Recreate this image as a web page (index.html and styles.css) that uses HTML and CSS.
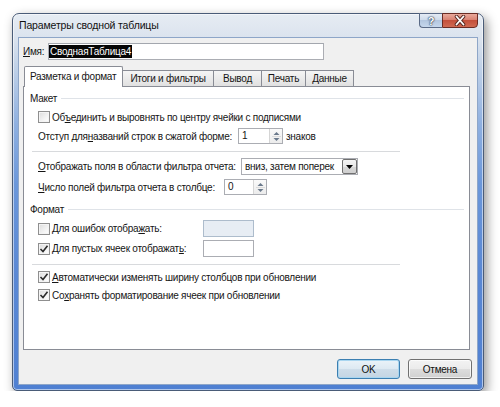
FILE: index.html
```html
<!DOCTYPE html>
<html lang="ru">
<head>
<meta charset="utf-8">
<title>Параметры сводной таблицы</title>
<link rel="stylesheet" href="styles.css">
</head>
<body>
<div class="window">
  <div class="titlebar">
    <span class="title">Параметры сводной таблицы</span>
    <div class="caption">
      <div class="cbtn help">?</div>
      <div class="cbtn close">
        <svg width="14" height="11" viewBox="0 0 14 11"><path d="M3.5 1.5 L10.5 9.5 M10.5 1.5 L3.5 9.5" stroke="#5a2a22" stroke-width="3.6" stroke-linecap="round"/><path d="M3.5 1.5 L10.5 9.5 M10.5 1.5 L3.5 9.5" stroke="#ffffff" stroke-width="1.8" stroke-linecap="round"/></svg>
      </div>
    </div>
  </div>
  <div class="client">
    <div class="name-row">
      <span class="name-label"><u>И</u>мя:</span>
      <div class="name-input"><span class="sel">СводнаяТаблица4</span></div>
    </div>
    <div class="tabs">
      <div class="tab t1 active">Разметка и формат</div>
      <div class="tab t2">Итоги и фильтры</div>
      <div class="tab t3">Вывод</div>
      <div class="tab t4">Печать</div>
      <div class="tab t5">Данные</div>
    </div>
    <div class="panel">
      <div class="group g1"><span>Макет</span></div>
      <div class="row r-merge"><span class="cb"></span><span>Об<u>ъ</u>единить и выровнять по центру ячейки с подписями</span></div>
      <div class="row r-indent">
        <span class="lbl w-indent">Отступ для <u>н</u>азваний строк в сжатой форме:</span>
        <div class="spin s-indent"><span class="val">1</span>
          <span class="spinbtn"><svg width="11" height="13" viewBox="0 0 11 13"><path d="M5.5 2 L8.5 5 L2.5 5 Z" fill="#6b7a8c"/><path d="M1 6.5 H10" stroke="#dcdcdc"/><path d="M2.5 8 L8.5 8 L5.5 11 Z" fill="#6b7a8c"/></svg></span>
        </div>
        <span class="suffix">знаков</span>
      </div>
      <div class="sep"></div>
      <div class="row r-show">
        <span class="lbl w-show"><u>О</u>тображать поля в области фильтра отчета:</span>
        <div class="combo"><span class="val">вниз, затем поперек</span>
          <span class="dd"><svg width="9" height="6" viewBox="0 0 9 6"><path d="M1 1 L8 1 L4.5 5 Z" fill="#000"/></svg></span>
        </div>
      </div>
      <div class="row r-count">
        <span class="lbl w-count"><u>Ч</u>исло полей фильтра отчета в столбце:</span>
        <div class="spin s-count"><span class="val">0</span>
          <span class="spinbtn"><svg width="11" height="13" viewBox="0 0 11 13"><path d="M5.5 2 L8.5 5 L2.5 5 Z" fill="#6b7a8c"/><path d="M1 6.5 H10" stroke="#dcdcdc"/><path d="M2.5 8 L8.5 8 L5.5 11 Z" fill="#6b7a8c"/></svg></span>
        </div>
      </div>
      <div class="group g2"><span>Формат</span></div>
      <div class="row r-err">
        <span class="lbl w-fmt"><span class="cb"></span><span>Для ошибок отобра<u>ж</u>ать:</span></span>
        <div class="field disabled"></div>
      </div>
      <div class="row r-empty">
        <span class="lbl w-fmt"><span class="cb checked"><svg width="10" height="10" viewBox="0 0 10 10"><path d="M1.5 5 L4 7.5 L8.5 1.8" fill="none" stroke="#2b2b2b" stroke-width="1.6"/></svg></span><span>Для пустых ячеек отображат<u>ь</u>:</span></span>
        <div class="field"></div>
      </div>
      <div class="sep sep2"></div>
      <div class="row r-auto"><span class="cb checked"><svg width="10" height="10" viewBox="0 0 10 10"><path d="M1.5 5 L4 7.5 L8.5 1.8" fill="none" stroke="#2b2b2b" stroke-width="1.6"/></svg></span><span><u>А</u>втоматически изменять ширину столбцов при обновлении</span></div>
      <div class="row r-keep"><span class="cb checked"><svg width="10" height="10" viewBox="0 0 10 10"><path d="M1.5 5 L4 7.5 L8.5 1.8" fill="none" stroke="#2b2b2b" stroke-width="1.6"/></svg></span><span>Со<u>х</u>ранять форматирование ячеек при обновлении</span></div>
    </div>
    <div class="buttons">
      <div class="btn default">OK</div>
      <div class="btn">Отмена</div>
    </div>
  </div>
</div>
</body>
</html>
```

FILE: styles.css
```css
* { box-sizing: border-box; }
body {
  margin: 0;
  background: #ffffff;
  font-family: "Liberation Sans", Arial, sans-serif;
  font-size: 10px;
  letter-spacing: -0.25px;
  color: #151515;
  white-space: nowrap;
}
u { text-decoration: underline; text-underline-offset: 1px; }

.window {
  margin: 13px 0 0 12px;
  width: 472px;
  height: 378px;
  border: 1px solid #4a5c78;
  border-radius: 7px 7px 5px 5px;
  padding: 0 6px 6px 6px;
  background: linear-gradient(180deg, #e6ecf3 0px, #dbe3ee 24px, #c3d3e8 50px, #8fb0e0 110px, #6b97da 170px, #5a88d4 260px, #4f80d2 100%);
  box-shadow: 3px 4px 11px rgba(0,0,0,0.42), inset 0 0 0 1px rgba(255,255,255,0.55);
  display: flex;
  flex-direction: column;
}

.titlebar {
  position: relative;
  height: 24px;
  display: flex;
  align-items: center;
}
.title {
  font-size: 10.5px;
  letter-spacing: -0.15px;
  color: #111;
  margin-top: -2px;
}
.caption {
  position: absolute;
  top: -1px;
  right: -1px;
  display: flex;
}
.cbtn {
  height: 15px;
  border: 1px solid #5a6a86;
  display: flex;
  align-items: center;
  justify-content: center;
}
.help {
  width: 23px;
  border-radius: 0 0 0 4px;
  border-right: none;
  background: linear-gradient(180deg, #e4ebf4 0%, #cfdbea 45%, #b3c6df 50%, #c6d7ec 100%);
  color: #fff;
  font-weight: bold;
  font-size: 11px;
  letter-spacing: 0;
  text-shadow: 0 0 1px #2f3f58, 0 0 1px #2f3f58, 0 0 2px #2f3f58;
}
.close {
  width: 36px;
  border-radius: 0 0 4px 0;
  border-color: #6b2c24;
  background: linear-gradient(180deg, #e9a99b 0%, #d98272 45%, #c4503b 50%, #d06a52 100%);
}

.client {
  flex: 1;
  background: #f0f0f0;
  box-shadow: 0 0 0 1px #8ea6c8;
  padding: 5px 5px 0 4px;
  display: flex;
  flex-direction: column;
}

.name-row {
  height: 17px;
  display: flex;
  align-items: center;
}
.name-label { width: 25px; }
.name-input {
  width: 276px;
  height: 17px;
  border: 1px solid #abadb3;
  border-top-color: #a3a7ae;
  background: #fff;
  display: flex;
  align-items: center;
}
.sel {
  background: #050505;
  color: #fff;
  line-height: 13px;
  padding: 0 1px 0 1px;
}

.tabs {
  margin-top: 6px;
  height: 20px;
  display: flex;
  align-items: flex-end;
  padding-left: 1px;
  position: relative;
  z-index: 1;
}
.tab {
  height: 16px;
  border: 1px solid #898c95;
  border-bottom: none;
  background: linear-gradient(180deg, #f5f5f5 0%, #ebebeb 50%, #e0e0e0 100%);
  text-align: center;
  line-height: 15px;
  margin-left: -1px;
}
.tab.active {
  height: 21px;
  margin-bottom: -1px;
  margin-left: 0;
  background: #fff;
  line-height: 20px;
  text-align: left;
  padding-left: 5px;
  border-radius: 2px 2px 0 0;
}
.t1 { width: 99px; }
.t2 { width: 92px; }
.t3 { width: 49px; }
.t4 { width: 45px; }
.t5 { width: 49px; }

.panel {
  width: 447px;
  height: 264px;
  border: 1px solid #898c95;
  background: #fff;
  display: flex;
  flex-direction: column;
}

.group {
  height: 14px;
  display: flex;
  align-items: center;
  padding-left: 6px;
}
.group::after {
  content: "";
  flex: 1;
  height: 1px;
  background: #dfe3e8;
  margin: 0 5px 0 4px;
}
.g1 { margin-top: 4px; }
.g2 { margin-top: 7px; }

.row {
  display: flex;
  align-items: center;
  padding-left: 14px;
}
.lbl { display: flex; align-items: center; flex: none; }

.cb {
  width: 12px;
  height: 12px;
  border: 1px solid #8f8f8f;
  background: linear-gradient(135deg, #dcdcdc 0%, #f3f3f3 60%, #ffffff 100%);
  box-shadow: inset 0 0 0 1px #f4f4f4;
  margin-right: 2px;
  flex: none;
  display: flex;
  align-items: center;
  justify-content: center;
}

.r-merge { margin-top: 5px; height: 14px; }
.r-indent { margin-top: 4px; height: 16px; }
.w-indent { width: 200px; }
.spin {
  height: 16px;
  border: 1px solid #abadb3;
  background: #fff;
  display: flex;
  align-items: stretch;
}
.spin .val { flex: 1; padding-left: 3px; line-height: 14px; }
.spinbtn {
  width: 13px;
  border-left: 1px solid #d5d5d5;
  display: flex;
  align-items: center;
  justify-content: center;
  background: linear-gradient(180deg, #fafafa, #ececec);
}
.s-indent { width: 45px; }
.s-count { width: 43px; }
.suffix { margin-left: 3px; }

.sep {
  margin: 7px 0 0 8px;
  width: 368px;
  height: 1px;
  background: #d8dadd;
  flex: none;
}

.r-show { margin-top: 6px; height: 17px; }
.w-show { width: 203px; }
.combo {
  width: 117px;
  height: 17px;
  border: 1px solid #abadb3;
  background: #fff;
  display: flex;
  align-items: stretch;
}
.combo .val { flex: 1; padding-left: 3px; line-height: 15px; }
.dd {
  width: 15px;
  border: 1px solid #707070;
  border-radius: 2px;
  background: linear-gradient(180deg, #f4f4f4 0%, #e8e8e8 50%, #d8d8d8 51%, #cfcfcf 100%);
  display: flex;
  align-items: center;
  justify-content: center;
}

.r-count { margin-top: 4px; height: 16px; }
.w-count { width: 186px; }

.r-err { margin-top: 4px; height: 17px; }
.r-empty { margin-top: 3px; height: 17px; }
.w-fmt { width: 165px; }
.field {
  width: 51px;
  height: 17px;
  border: 1px solid #abadb3;
  background: #fff;
}
.field.disabled {
  border-color: #adbccc;
  background: #e7edf4;
}

.sep2 { margin-top: 7px; }
.r-auto { margin-top: 5px; height: 14px; }
.r-keep { margin-top: 4px; height: 14px; }

.buttons {
  margin-top: 9px;
  display: flex;
  justify-content: flex-end;
  gap: 8px;
}
.btn {
  width: 64px;
  height: 20px;
  border: 1px solid #707070;
  border-radius: 3px;
  background: linear-gradient(180deg, #f3f3f3 0%, #ebebeb 50%, #dddddd 51%, #d0d0d0 100%);
  box-shadow: inset 0 0 0 1px rgba(255,255,255,0.7);
  display: flex;
  align-items: center;
  justify-content: center;
  color: #111;
}
.btn.default {
  width: 63px;
  border-color: #3c7fb1;
  background: linear-gradient(180deg, #eaf3f9 0%, #dde9f2 50%, #cedde9 51%, #c4d5e3 100%);
  box-shadow: inset 0 0 0 1px #a9d6f0;
}
```
